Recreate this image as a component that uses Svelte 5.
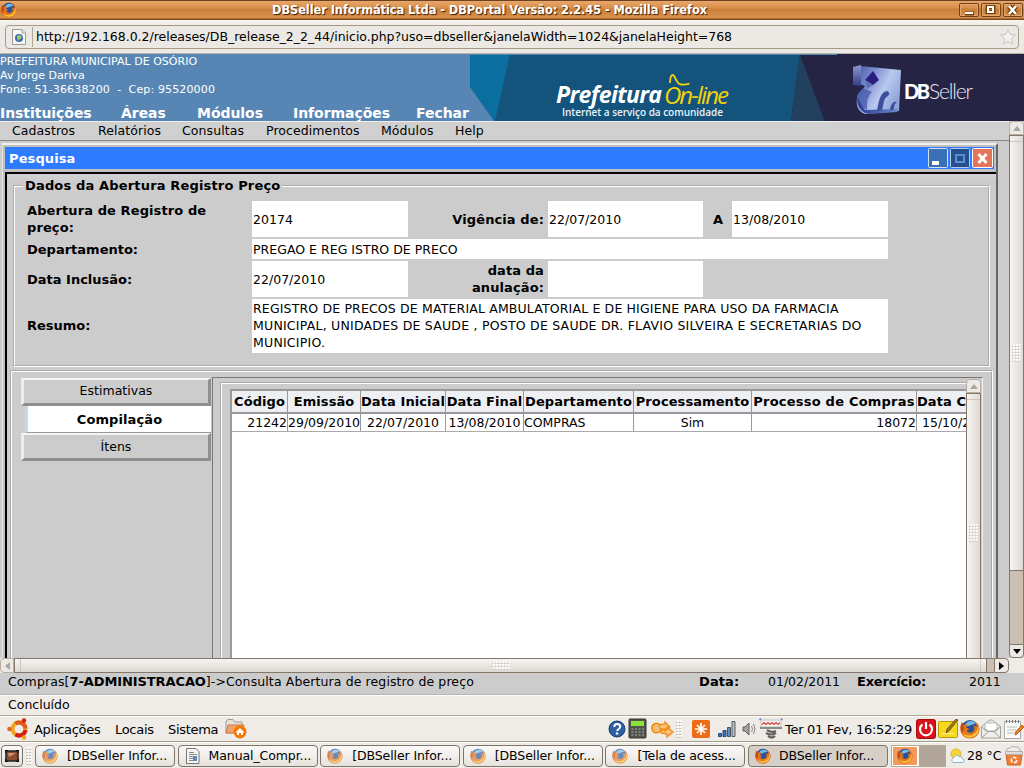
<script>
  const areas = ['Instituições', 'Áreas', 'Módulos', 'Informações', 'Fechar'];
  const menus = ['Cadastros', 'Relatórios', 'Consultas', 'Procedimentos', 'Módulos', 'Help'];
  const columns = ['Código', 'Emissão', 'Data Inicial', 'Data Final', 'Departamento', 'Processamento', 'Processo de Compras', 'Data Compilação'];
  const row = ['21242', '29/09/2010', '22/07/2010', '13/08/2010', 'COMPRAS', 'Sim', '18072', '15/10/2010'];
  const align = ['right', 'left', 'center', 'center', 'left', 'center', 'right', 'near'];
  const tasks = [
    { label: '[DBSeller Infor...', icon: 'fox' },
    { label: 'Manual_Compr...', icon: 'doc' },
    { label: '[DBSeller Infor...', icon: 'fox' },
    { label: '[DBSeller Infor...', icon: 'fox' },
    { label: '[Tela de acess...', icon: 'fox' },
    { label: 'DBSeller Infor...', icon: 'fox', active: true }
  ];
</script>

{#snippet firefox(size)}
  <svg width={size} height={size} viewBox="0 0 20 20">
    <circle cx="10" cy="10" r="9" fill="#24539b" />
    <path d="M5 6C7 1 14 1 16 5c-2-1-3 1-5 1S8 9 5 6z" fill="#79b9e4" />
    <path d="M2 3c0 2 .6 2.400 2 3 1-1 3-1 4 0-1 1-2 1.500-1.500 3C8 9 9 9.500 9 10c-1 .6-2 .8-2 2 1 2 5 2.500 7-.5 1-2 .2-4-1-5 2 0 3 1 3.500 2C17 6 16 4 14.500 2.500 18 4 20 7 19.500 11c-.8 5-4.500 8.500-9.500 8.500S.8 16 .5 11C.3 8 .8 5 2 3z" fill="#e8761b" />
    <path d="M18 6c2 6-1 12-8 12.500-4 0-6-2-7-4 4 3 11 3 14-3 .8-2 1-4 1-5.500z" fill="#fbc73b" />
    <path d="M2 3c-2 4-2 8 0 11l2-4-.5-4z" fill="#c64912" />
  </svg>
{/snippet}

<div class="desktop">
  <header class="titlebar">
    <span class="fox">{@render firefox(16)}</span>
    <span class="title">DBSeller Informática Ltda - DBPortal Versão: 2.2.45 - Mozilla Firefox</span>
    <div class="wm">
      <i><svg width="20" height="14"><path d="M6 10.500h9" stroke="#74400f" stroke-width="4" /><path d="M6 10h8" stroke="#fff" stroke-width="2" /></svg></i>
      <i><svg width="20" height="14"><rect x="6.500" y="4" width="6" height="5" fill="none" stroke="#74400f" stroke-width="4" /><rect x="7" y="4" width="5" height="5" fill="none" stroke="#fff" stroke-width="2" /></svg></i>
      <i><svg width="20" height="14"><path d="M6 3l7 8M13 3l-7 8" stroke="#74400f" stroke-width="5" /><path d="M6 3l7 8M13 3l-7 8" stroke="#fff" stroke-width="2.500" /></svg></i>
    </div>
  </header>

  <div class="urlbar">
    <div class="field">
      <span class="site">
        <svg width="14" height="16" viewBox="0 0 14 16"><path d="M.5.5h9.500l3.500 3.500v11.500H.5z" fill="#f7f7f5" stroke="#9b9b98" /><path d="M10 .5V4h3.500" fill="#ddd" stroke="#aaa" /><circle cx="7" cy="9" r="4" fill="#3d6cad" /><path d="M5 7l3-1 2 2-2 2-2 2-1-3z" fill="#a5c66b" /></svg>
      </span>
      <span class="url">http://192.168.0.2/releases/DB_release_2_2_44/inicio.php?uso=dbseller&amp;janelaWidth=1024&amp;janelaHeight=768</span>
      <svg class="star" width="18" height="18" viewBox="0 0 18 18"><path d="M9 1.500l2.200 5 5.300.5-4 3.600 1.200 5.400L9 13.200 4.300 16l1.200-5.400-4-3.600 5.300-.5z" fill="#f4f1ee" stroke="#cbc7c3" stroke-linejoin="round" /></svg>
    </div>
  </div>

  <section class="banner">
    <div class="org">
      <div class="addr">
        <p>PREFEITURA MUNICIPAL DE OSÓRIO</p>
        <p>Av Jorge Dariva</p>
        <p class="a3">Fone: 51-36638200 &nbsp;- &nbsp;Cep: 95520000</p>
      </div>
      <nav class="areas">{#each areas as a}<span>{a}</span>{/each}</nav>
    </div>
    <svg class="art" width="554" height="67" viewBox="470 54 554 67">
      <defs>
        <linearGradient id="cube" x1="0" y1="0" x2="1" y2=".6"><stop offset="0" stop-color="#4656a8" /><stop offset=".3" stop-color="#7787cb" /><stop offset=".65" stop-color="#b9c8ee" /><stop offset="1" stop-color="#8ea4da" /></linearGradient>
        <linearGradient id="side" x1="0" y1="0" x2="0" y2="1"><stop offset="0" stop-color="#8d99cd" /><stop offset="1" stop-color="#2f3c8c" /></linearGradient>
        <linearGradient id="base" x1="0" y1="0" x2="1" y2="0"><stop offset="0" stop-color="#2b3a90" /><stop offset="1" stop-color="#6c86cd" /></linearGradient>
      </defs>
      <rect x="470" y="54" width="554" height="67" fill="#14547c" />
      <path d="M470 54h40l-15 67h-1l-24-34z" fill="#0a6f9f" />
      <path d="M470 87l24 34h-24z" fill="#5886b4" />
      <path d="M800 54h224v67H791z" fill="#262445" />
      <path d="M800 55l24.500 66H791z" fill="#22415f" />
      <path d="M470 54h367v1H470z" fill="#5886b4" />
      <text x="556" y="103" textLength="106" class="pref">Prefeitura</text>
      <text x="664" y="103.500" textLength="65" class="online">On-line</text>
      <path d="M670 83c0-5 1-8 3-8s3 9 8 9.500q4 .5 8.500-.8" fill="none" stroke="#f3d10c" stroke-width="1.800" />
      <text x="562" y="115.500" textLength="161" class="slogan">Internet a serviço da comunidade</text>
      <path d="M860 66l41 4-2 41-34 3c-8-3-9-9-8-17 1-5 6-7 8-11l-5-2z" fill="url(#cube)" />
      <path d="M853 67l8-2v21l-8-1z" fill="url(#side)" />
      <path d="M857 97c3 3 5 9 8 13l33-1-1 3-27 2c-7 0-13-6-13-17z" fill="url(#base)" />
      <path d="M857 97q2-6 6-9l9 4q-6 5-5 18-8-4-10-13z" fill="#4456aa" opacity=".75" />
      <path d="M873 71l6 9-6 5-8-5z" fill="#2a1f80" />
      <path d="M865 80l8 5-6 4z" fill="#5d70ba" />
      <path d="M877 111c2-10 3-19 10-20q4 2 1 5c-5 2-4 9-6 14zM890 110c1-6 3-9 7-8-4 3-2 6-4 8z" fill="#3c4f9d" />
      <text x="904" y="99" textLength="26" class="db">DB</text>
      <text x="929" y="99" textLength="44" class="seller">Seller</text>
    </svg>
  </section>

  <div class="view">
    <main class="page">
      <nav class="menus">{#each menus as m}<span>{m}</span>{/each}</nav>
      <section class="win">
        <div class="wintitle">
          <b>Pesquisa</b>
          <svg width="66" height="20" viewBox="0 0 66 20">
            <rect x=".5" y=".5" width="19" height="19" rx="1" fill="#3a70b5" stroke="#d5e2f1" /><path d="M4 13h7v4H4z" fill="#fff" />
            <rect x="22.500" y=".5" width="19" height="19" rx="1" fill="#25508f" stroke="#b6cdea" /><rect x="28" y="7" width="8" height="7" fill="none" stroke="#5c8fd0" stroke-width="2" />
            <rect x="44.500" y=".5" width="20" height="19" rx="1" fill="#e2745a" stroke="#fff" /><path d="M50.500 6l8 9M58.500 6l-8 9" stroke="#fff" stroke-width="3" />
          </svg>
        </div>
        <div class="frame">
          <fieldset class="dados">
            <legend>Dados da Abertura Registro Preço</legend>
            <div class="form">
              <b>Abertura de Registro de preço:</b><div class="v">20174</div><b class="r">Vigência de:</b><div class="v">22/07/2010</div><b class="c">A</b><div class="v">13/08/2010</div>
              <b class="tight">Departamento:</b><div class="v wide">PREGAO E REG ISTRO DE PRECO</div>
              <b class="tight">Data Inclusão:</b><div class="v">22/07/2010</div><b class="r">data da<br />anulação:</b><div class="v"></div><i></i><i></i>
              <b class="tight up">Resumo:</b><div class="v wide memo"><span class="m1">REGISTRO DE PRECOS DE MATERIAL AMBULATORIAL E DE HIGIENE PARA USO DA FARMACIA</span><span class="m2">MUNICIPAL, UNIDADES DE SAUDE , POSTO DE SAUDE DR. FLAVIO SILVEIRA E SECRETARIAS DO</span><span class="m2">MUNICIPIO.</span></div>
            </div>
          </fieldset>
          <div class="details">
            <div class="tabs">
              <div class="tab">Estimativas</div>
              <div class="tab on">Compilação</div>
              <div class="tab last">Ítens</div>
            </div>
            <div class="pane">
              <div class="inner">
                <div class="grid">
                  <div class="tr th">{#each columns as c}<span>{c}</span>{/each}</div>
                  <div class="tr td">{#each row as c, i}<span class={align[i]}>{c}</span>{/each}</div>
                </div>
              </div>
              <div class="vscroll short">
                <div class="btn"><svg width="8" height="5"><path d="M0 5l4-5 4 5z" fill="#a9a6a0" /></svg></div>
                <div class="thumb"><span class="dots"></span></div>
              </div>
            </div>
          </div>
        </div>
      </section>
    </main>
    <div class="vscroll full">
      <div class="btn"><svg width="8" height="5"><path d="M0 5l4-5 4 5z" fill="#a9a6a0" /></svg></div>
      <div class="thumb"><span class="dots"></span></div>
      <div class="trough"></div>
      <div class="btn down"><svg width="8" height="5"><path d="M0 0l4 5 4-5z" fill="#000" /></svg></div>
    </div>
  </div>

  <div class="hscroll">
    <div class="hbtn"><svg width="5" height="8"><path d="M5 0L0 4l5 4z" fill="#a9a6a0" /></svg></div>
    <div class="hthumb"><span class="dots"></span></div>
    <div class="htrough"></div>
    <div class="hbtn right"><svg width="5" height="8"><path d="M0 0l5 4-5 4z" fill="#000" /></svg></div>
  </div>

  <div class="path">
    <span class="crumb">Compras[<b>7-ADMINISTRACAO</b>]-&gt;Consulta Abertura de registro de preço</span>
    <b class="k1">Data:</b><span class="d1">01/02/2011</span><b class="k2">Exercício:</b><span>2011</span>
  </div>
  <div class="done"><span>Concluído</span></div>

  <div class="panel">
    <svg class="ubuntu" width="22" height="22" viewBox="0 0 22 22"><circle cx="12" cy="11" r="6.500" fill="none" stroke="#f1a31c" stroke-width="4" /><path d="M8.500 5.500a6.500 6.500 0 0 1 10 5" fill="none" stroke="#e5581c" stroke-width="4" /><path d="M18.500 12a6.500 6.500 0 0 1-10 4.500" fill="none" stroke="#d22018" stroke-width="4" /><circle cx="2.500" cy="11" r="2.300" fill="#e8601c" /><circle cx="17" cy="2.500" r="2.300" fill="#d22018" /><circle cx="17" cy="19.500" r="2.300" fill="#f1a31c" /></svg>
    <span class="p1">Aplicações</span><span class="p2">Locais</span><span class="p3">Sistema</span>
    <svg class="home" width="22" height="20" viewBox="0 0 22 20"><path d="M1 14V2l2-1.500h5L10 3h7v11z" fill="#e3e0d9" stroke="#a59c90" /><path d="M1 14L3 6h16l-2 8z" fill="#f2a36d" stroke="#cf7d45" /><circle cx="15" cy="13" r="6.500" fill="#f57900" /><path d="M10.500 13.500L15 9l4.500 4.500H18V16h-2v-2h-2v2h-2v-2.500z" fill="#fff" /></svg>
    <div class="tray">
      <svg width="18" height="20" viewBox="0 0 18 20"><circle cx="9" cy="10" r="8" fill="#2f5fa3" stroke="#1d3f75" /><path d="M6.200 8q0-3 3-3t3 2.500q0 1.500-1.500 2.500t-1.500 2" fill="none" stroke="#fff" stroke-width="2" /><circle cx="9" cy="14.500" r="1.300" fill="#fff" /></svg>
      <svg class="calc" width="20" height="22" viewBox="0 0 20 22"><rect x="1" y="1" width="17" height="19" rx="1" fill="#4f524d" stroke="#343633" /><path d="M3 3h13v5H3z" fill="#8ae234" /><path d="M3.500 11h13M3.500 14h13M3.500 17h13" stroke="#8d908a" stroke-width="1.500" stroke-dasharray="2 1.500" /></svg>
      <svg class="keys" width="24" height="18" viewBox="0 0 24 18"><circle cx="6.500" cy="8" r="4.500" fill="#ffd9a0" stroke="#ef8d1b" stroke-width="2" /><circle cx="6" cy="8" r="1.800" fill="#efebe7" stroke="#ef8d1b" /><path d="M9 5l6-1 0-2 5 5-5 4v-2l-5 0zM12 10l5-1v-2l6 5-6 5v-3l-6-1z" fill="#ffc271" stroke="#ef8d1b" stroke-width="1.300" /></svg>
      <span class="grip"></span>
      <svg class="update" width="18" height="18"><rect width="18" height="18" rx="2" fill="#ee6b17" /><path d="M9 3v12M3 9h12M5 5l8 8M13 5l-8 8" stroke="#fff" stroke-width="1.700" /></svg>
      <svg class="signal" width="18" height="16"><path d="M.5 12.500h3v3h-3zM5 9.500h3v6H5z" fill="#3d72b4" stroke="#264b80" /><path d="M9.500 6.500h3v9h-3z" fill="#5f8cc6" stroke="#48525f" /><path d="M14 .5h3v15h-3z" fill="#bcc1c6" stroke="#555c62" /></svg>
      <svg class="sound" width="14" height="14"><path d="M1 5h2l4-4v12L3 9H1z" fill="#a5a29d" stroke="#62605c" /><path d="M9.500 4q2 3 0 6M11.500 2q3 5 0 10" fill="none" stroke="#898680" /></svg>
      <svg class="spring" width="24" height="22" viewBox="0 0 24 22"><path d="M2 2h20v7H2z" fill="#f4f4f3" stroke="#c5c1bb" /><path d="M3 6.500l2-2 2 2 2-2 2 2 2-2 2 2 2-2 2 2 2-2" fill="none" stroke="#d83d3d" stroke-width="1.100" /><path d="M1 10h22" stroke="#8b8b89" stroke-width="2" /><path d="M.5 2L2 .5M23.500 2L22 .5" stroke="#5b87c4" stroke-width="1.500" /><path d="M8 12q4 3 9 1M7 15q5 3 10 0M9 18q4 3 7 0" fill="none" stroke="#656561" stroke-width="2.200" /></svg>
      <span class="clock">Ter 01 Fev, 16:52:29</span>
      <svg class="power" width="20" height="20"><rect x=".5" y=".5" width="19" height="19" rx="2" fill="#d9121b" stroke="#a40c10" /><path d="M6.500 5.500a6 6 0 1 0 7 0" fill="none" stroke="#fff" stroke-width="2.200" /><path d="M10 3v7" stroke="#fff" stroke-width="2.200" /></svg>
      <svg class="note" width="21" height="20"><rect x=".5" y="2.500" width="19" height="16" rx="1" fill="#f4da1e" stroke="#b89600" /><path d="M4 14.500h12" stroke="#fdf4a0" /><path d="M20 1l-9 11-3 2 1-4 9-10z" fill="#a87318" stroke="#65490f" stroke-width=".8" /></svg>
      <span class="trayfox">{@render firefox(20)}</span>
      <svg class="mail" width="20" height="20"><path d="M.5 7.500L9 1h2l8.500 6.500V19H.5z" fill="#eeeeec" stroke="#a3a39f" /><path d="M4 4h12v8H4z" fill="#fff" stroke="#b8b8b4" /><path d="M.5 8l7 4.500h5l7-4.500M.5 19l7-6.500M19.500 19l-7-6.500" fill="none" stroke="#999995" /></svg>
      <svg class="edit" width="20" height="21"><path d="M.5 2.500h16v17H.5z" fill="#fafaf8" stroke="#aaa" /><path d="M2.500 1v3M5.500 1v3M8.500 1v3M11.500 1v3M14.500 1v3" stroke="#777" /><path d="M3 8h10M3 11h9M3 14h7" stroke="#b9b9b5" /><path d="M20 8l-7 7-2 1 .5-3L18 6z" fill="#ef7e18" stroke="#8a4b14" stroke-width=".7" /></svg>
    </div>
  </div>

  <div class="taskbar">
    <div class="show"><svg width="14" height="12"><rect x="1" y="1" width="12" height="10" fill="#8c4b30" stroke="#222" stroke-width="1.500" /><path d="M3 3h8L4 7z" fill="#c79779" /><path d="M0 3V0h3M11 0h3v3M14 9v3h-3M3 12H0V9" fill="none" stroke="#000" stroke-width="1.500" /></svg></div>
    <span class="grip"></span>
    <div class="tasks">
      {#each tasks as t}
        <div class="task" class:active={t.active}>
          {#if t.icon === 'fox'}<span class="tfox">{@render firefox(16)}</span>{:else}
            <svg class="tdoc" width="14" height="16"><path d="M.5.5h9.500l3 3v12H.5z" fill="#f6f6f4" stroke="#777" /><path d="M3 4.500h5M3 6.500h8M3 8.500h4M3 10.500h4M3 12.500h4" stroke="#888" /><rect x="7" y="8" width="4" height="5" fill="#5e87bb" /></svg>
          {/if}
          <span>{t.label}</span>
        </div>
      {/each}
    </div>
    <div class="pager"><div class="on">{@render firefox(16)}</div><div></div></div>
    <svg class="weather" width="16" height="16"><circle cx="6" cy="6" r="5" fill="#f6d43a" stroke="#dcb632" /><path d="M3 14.500q-3-3 1-5 2-4 5-1 3-1 3 2 4 1 1 4z" fill="#f7fbff" stroke="#8fafcf" /></svg>
    <span class="temp">28 °C</span>
    <svg class="trash" width="18" height="20"><path d="M1 7q0-5 4-5 2-3 5-1 5-1 6 6z" fill="#eee" stroke="#aaa" /><path d="M1 8h16l-1.500 11h-13z" fill="#ef7e35" stroke="#cd6221" /><path d="M.5 5.500h17v3H.5z" fill="#ddd" stroke="#b5b0a9" /><circle cx="9" cy="14" r="2.700" fill="none" stroke="#fff" stroke-width="1.500" stroke-dasharray="4 1.600" /></svg>
  </div>
</div>

<style>
  :global(body) { margin: 0; overflow: hidden; }
  * { box-sizing: border-box; }
  svg { display: block; flex: none; }
  p { margin: 0; }
  i { font-style: normal; }
  .desktop { width: 1024px; height: 768px; overflow: hidden; display: grid; grid-template-rows: 20px 34px 67px 537px 15px 22px 21px 26px 26px; font-family: "DejaVu Sans", sans-serif; font-size: 12.500px; color: #000; background: #efebe7; white-space: nowrap; }

  .titlebar { display: flex; align-items: center; background: linear-gradient(#6e4022 0 1px, #e8a76b 1px, #d98f4b 8px, #c97f3a 9px, #d9914d 18px, #7f4b20 19px); color: #fff; }
  .fox { width: 20px; padding-left: 1px; }
  .title { flex: 1; text-align: center; font-weight: bold; font-size: 11.400px; text-shadow: 1px 1px 1px #3a1e08; letter-spacing: -.06px; line-height: 18px; padding-bottom: 1px; }
  .wm { display: flex; gap: 2px; width: 65px; }
  .wm i { width: 20px; height: 14px; border-radius: 2px; box-shadow: inset 0 0 0 1px #6f421b, inset 0 0 0 2px #e5a86f; }

  .urlbar { background: linear-gradient(#f8f5f2, #ece8e3 6px); padding: 5px 5px 5px; border-bottom: 1px solid #b9b3aa; }
  .field { height: 24px; border: 1px solid #a89a89; border-radius: 4px; display: flex; align-items: center; background: #ece9e4; }
  .site { width: 27px; height: 20px; padding: 2px 6px; border-right: 1px solid #b3a797; }
  .url { flex: 1; padding: 0 0 2px 3px; letter-spacing: -.02px; }
  .star { margin-right: 1px; }

  .banner { display: grid; grid-template-columns: 470px 554px; background: #5886b4; color: #fff; }
  .addr { height: 51px; font-size: 11px; line-height: 14px; padding-top: 1px; letter-spacing: .02px; }
  .a3 { letter-spacing: .14px; }
  .areas { display: flex; font-size: 14px; font-weight: bold; line-height: 16px; }
  .areas span { letter-spacing: -.05px; }
  .areas span:nth-child(1) { width: 121px; }
  .areas span:nth-child(2) { width: 76px; }
  .areas span:nth-child(3) { width: 96px; }
  .areas span:nth-child(4) { width: 123px; }
  .pref { font: italic 700 23px "Open Sans", sans-serif; fill: #fff; }
  .online { font: italic 400 24px "Open Sans", sans-serif; fill: #f3d10c; }
  .slogan { font: 600 10px "Open Sans", sans-serif; fill: #e8f1f8; }
  .db { font: 900 20px Lato, sans-serif; fill: #fff; }
  .seller { font: 300 21px Lato, sans-serif; fill: #e7e7f2; }

  .view { display: grid; grid-template-columns: 1009px 15px; background: #ccc; overflow: hidden; }
  .page { overflow: hidden; display: flex; flex-direction: column; }
  .menus { display: grid; grid-template-columns: 86px 84px 84px 115px 74px auto; padding-left: 12px; height: 20px; flex: none; line-height: 18px; border-top: 1px solid #eee; border-bottom: 1px solid #888; background: #d0d0d0; letter-spacing: .08px; }
  .win { margin: 2px 0 0 2px; width: 996px; height: 600px; flex: none; border: solid; border-width: 2px 2px 0 1px; border-color: #f0f0f0 #666 #666 #e4e4e4; padding: 2px 2px 0 2px; background: #bfbfbf; }
  .wintitle { height: 22px; background: #2e7bff; color: #fff; display: flex; align-items: center; justify-content: space-between; padding: 0 0 0 4px; font-size: 13px; }
  .frame { margin: 3px -2px 0 0; height: 560px; border-top: 2px solid #000; border-left: 2px solid #000; background: linear-gradient(#d2d2d2, #ccc 8px); overflow: hidden; padding: 4px 3px 0 3px; }
  b { font-size: 13px; letter-spacing: .1px; }
  .dados { margin: 0 3px; padding: 0; height: 189px; border: 2px groove #fff; }
  legend { margin-left: 8px; padding: 0 2px; font-weight: bold; font-size: 13px; line-height: 16px; letter-spacing: .16px; }
  .form { display: grid; grid-template-columns: 223px 156px 136px 155px 25px 156px; grid-template-rows: 36px 20px 36px 54px; gap: 2px; padding: 7px 0 0 12px; line-height: 17px; }
  .form > b { align-self: center; white-space: normal; padding-right: 25px; }
  .form > b.tight { letter-spacing: 0; }
  .form > b.up { padding-bottom: 2px; }
  .form > b.r { text-align: right; padding-right: 2px; }
  .form > b.c { padding: 0 0 0 8px; }
  .v { background: #fff; padding-left: 1px; display: flex; align-items: center; letter-spacing: .02px; }
  .v.wide { grid-column: span 5; }
  .v.memo { flex-direction: column; align-items: flex-start; padding-top: 1px; }
  .m1 { letter-spacing: .155px; }
  .m2 { letter-spacing: .225px; }

  .details { margin-top: 3px; height: 400px; border: 2px groove #fff; display: grid; grid-template-columns: 200px 771px; padding: 5px 0 0 0; }
  .tabs { padding: 1px 1px 0 9px; }
  .tab { height: 28px; text-align: center; line-height: 22px; border: 3px solid; border-color: #f4f4f4 #8f8f8f #8f8f8f #eee; border-top-width: 2px; letter-spacing: .02px; }
  .tab.last { line-height: 24px; }
  .tab.on { height: 27px; margin-left: 4px; background: #fff; border: 0; border-left: 3px solid #c6d9e8; border-bottom: 1px solid #999; font-weight: bold; font-size: 13px; line-height: 27px; letter-spacing: .1px; }
  .pane { border: 1px solid #777; border-right-color: #eee; border-width: 1px 1px 0 1px; display: grid; grid-template-columns: 753px 15px; overflow: hidden; }
  .inner { margin: 4px 0 0 7px; border: 2px groove #fff; border-right: 0; padding: 5px 0 0 8px; overflow: hidden; }
  .grid { width: 900px; height: 400px; background: #fff; border: 2px solid #999; }
  .tr { display: grid; grid-template-columns: 56px 73px 85px 78px 110px 118px 165px 110px; }
  .tr span { border-right: 1px solid #999; }
  .th { height: 23px; background: #eeeff3; border-bottom: 2px solid #999; font-weight: bold; font-size: 13px; line-height: 21px; text-align: center; letter-spacing: .08px; }
  .th span:nth-child(7) { letter-spacing: .22px; }
  .td { height: 18px; border-bottom: 1px solid #aaa; line-height: 17px; }
  .right { text-align: right; }
  .center { text-align: center; }
  .near { padding-left: 5px; }

  .vscroll { display: flex; flex-direction: column; }
  .short { margin-top: 1px; height: 290px; }
  .btn { height: 14px; flex: none; border: 1px solid #b9aea3; border-radius: 4px 4px 0 0; background: #edeae6; display: flex; align-items: center; justify-content: center; }
  .down { border-color: #85766a; border-radius: 0 0 4px 4px; }
  .thumb { flex: 1; border: 1px solid #85766a; background: linear-gradient(#85766a00 5px, #cfc6bd 5px 6px, transparent 6px), linear-gradient(90deg, #f7f5f2, #ddd8d2); display: flex; align-items: center; justify-content: center; }
  .full .thumb { flex: none; height: 436px; }
  .trough { flex: 1; background: #cbbfb4; border: 1px solid #85766a; border-width: 0 1px; }
  .dots { width: 9px; height: 18px; background: conic-gradient(#fff 0 25%, #e8e4df 0 50%, #d3cdc6 0 75%, #e8e4df 0) 0 0 / 3px 3px; }
  .short .thumb .dots { margin-top: 4px; }

  .hscroll { display: flex; width: 1009px; }
  .hbtn { width: 14px; border: 1px solid #b9aea3; border-radius: 4px 0 0 4px; display: flex; align-items: center; justify-content: center; background: #edeae6; }
  .hbtn.right { width: 15px; border-color: #85766a; border-radius: 0 4px 4px 0; }
  .hthumb { width: 973px; border: 1px solid #85766a; background: linear-gradient(90deg, transparent 5px, #cfc6bd 5px 6px, transparent 6px 965px, #cfc6bd 965px 966px, transparent 966px), linear-gradient(#f7f5f2, #ddd8d2); display: flex; align-items: center; justify-content: center; }
  .hthumb .dots { width: 18px; height: 9px; }
  .htrough { width: 7px; background: #cbbfb4; border: 1px solid #85766a; border-width: 1px 0; }

  .path { background: #ccc; border-bottom: 1px solid #b6b6b6; padding-left: 8px; display: flex; line-height: 18px; }
  .crumb { width: 691px; letter-spacing: .11px; }
  .crumb b { letter-spacing: -.1px; }
  .k1 { width: 69px; }
  .d1 { width: 89px; }
  .k2 { width: 112px; letter-spacing: -.2px; }
  .done { background: #efece7; border-top: 1px solid #fff; border-bottom: 1px solid #b5a48f; padding-left: 8px; line-height: 17px; }

  .panel { display: flex; align-items: center; background: #efece7; border-top: 1px solid #fff; border-bottom: 1px solid #a59987; font-size: 13px; letter-spacing: -.3px; }
  .ubuntu { margin: 0 5px 0 7px; }
  .p1 { width: 81px; }
  .p2 { width: 53px; }
  .p3 { width: 57px; }
  .tray { display: flex; align-items: center; margin-left: auto; }
  .calc { margin-left: 2px; }
  .keys { margin-left: 2px; }
  .grip { width: 6px; height: 18px; background: conic-gradient(#fff 0 25%, #efebe7 0 50%, #c3bbb1 0 75%, #efebe7 0) 0 0 / 3px 3px; }
  .tray .grip { margin-left: 2px; }
  .update { margin-left: 10px; }
  .signal { margin-left: 8px; }
  .sound { margin-left: 6px; }
  .spring { margin-left: 3px; }
  .clock { width: 127px; margin: 0 4px 0 2px; }
  .note { margin-left: 2px; }
  .trayfox { margin-left: 1px; }
  .mail { margin-left: 1px; }
  .edit { margin-left: 3px; }

  .taskbar { display: flex; align-items: center; background: #efece7; border-top: 1px solid #fff; letter-spacing: -.1px; }
  .show { width: 22px; height: 22px; margin: 0 3px 0 1px; border: 1px solid #7d746a; border-radius: 4px; background: linear-gradient(#fbfaf9, #e2ded9); display: flex; align-items: center; justify-content: center; }
  .tasks { display: grid; grid-template-columns: repeat(6, 140px); column-gap: 2.600px; margin-left: 3px; }
  .task { height: 22px; border: 1px solid #7d746a; border-radius: 4px; background: linear-gradient(#fbfaf9, #f1eeeb 50%, #e6e2dd); display: flex; align-items: center; }
  .task.active { background: #d5cfc8; }
  .tfox { width: 31px; padding-left: 6px; opacity: .65; }
  .active .tfox { opacity: 1; width: 30px; }
  .tdoc { margin: 0 9px 0 7px; }
  .pager { display: flex; gap: 1px; width: 55px; height: 22px; margin-left: 3px; border: 1px solid #b5a999; background: #fff; }
  .pager div { width: 27px; background: #b0a598; display: flex; align-items: center; justify-content: center; }
  .pager .on { background: #f39a5c; border: 1px solid #fff; }
  .weather { margin-left: 4px; }
  .temp { width: 36px; margin-left: 1px; }
  .trash { margin-left: 2px; }
</style>
